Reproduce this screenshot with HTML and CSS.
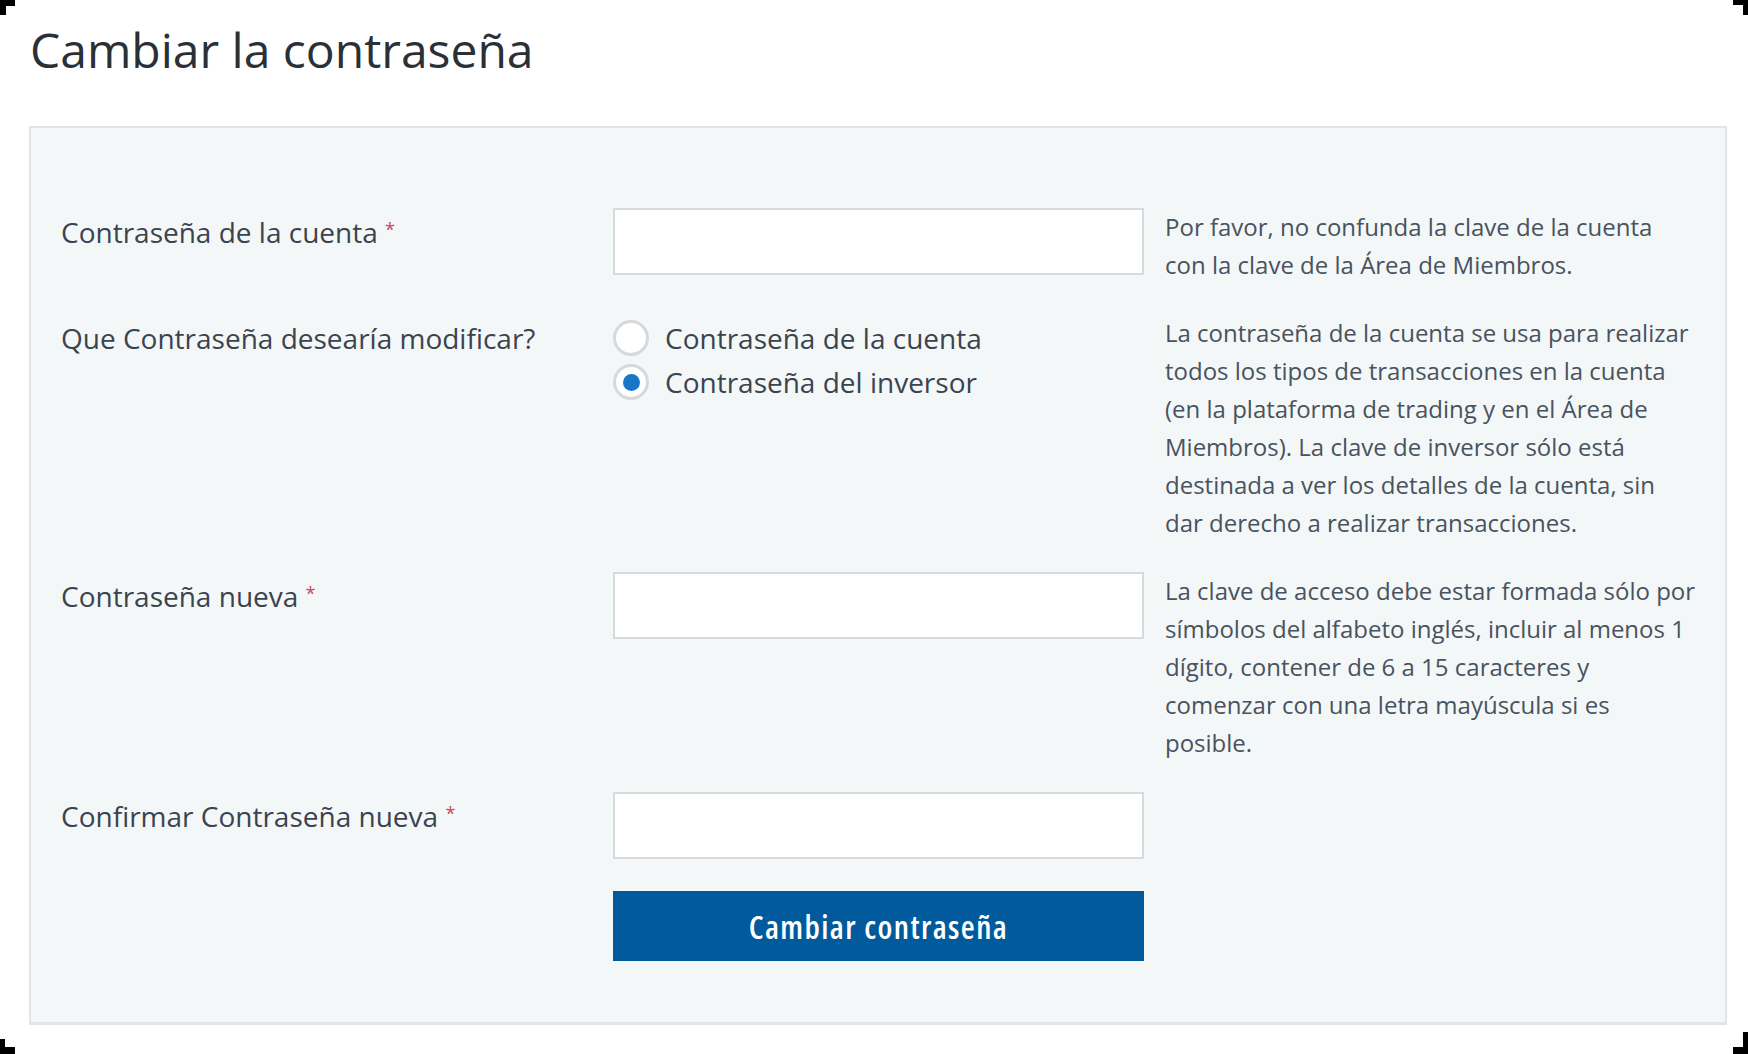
FILE: index.html
```html
<!DOCTYPE html>
<html lang="es">
<head>
<meta charset="utf-8">
<title>Cambiar la contraseña</title>
<link rel="stylesheet" href="styles.css">
</head>
<body>
<div class="page">
  <h1 class="title">Cambiar la contraseña</h1>
  <form class="panel">
    <label class="label" for="cur">Contraseña de la cuenta <span class="req">*</span></label>
    <div class="field"><input id="cur" class="input" type="password"></div>
    <p class="help">Por favor, no confunda la clave de la cuenta<br>con la clave de la Área de Miembros.</p>

    <div class="label">Que Contraseña desearía modificar?</div>
    <div class="field radios">
      <label class="option"><span class="radio"></span>Contraseña de la cuenta</label>
      <label class="option"><span class="radio checked"></span>Contraseña del inversor</label>
    </div>
    <p class="help">La contraseña de la cuenta se usa para realizar<br>todos los tipos de transacciones en la cuenta<br>(en la plataforma de trading y en el Área de<br>Miembros). La clave de inversor sólo está<br>destinada a ver los detalles de la cuenta, sin<br>dar derecho a realizar transacciones.</p>

    <label class="label" for="new">Contraseña nueva <span class="req">*</span></label>
    <div class="field"><input id="new" class="input" type="password"></div>
    <p class="help">La clave de acceso debe estar formada sólo por<br>símbolos del alfabeto inglés, incluir al menos 1<br>dígito, contener de 6 a 15 caracteres y<br>comenzar con una letra mayúscula si es<br>posible.</p>

    <label class="label" for="conf">Confirmar Contraseña nueva <span class="req">*</span></label>
    <div class="field"><input id="conf" class="input" type="password"></div>
    <p class="help"></p>

    <div class="field btn-cell"><button type="button" class="button">Cambiar contraseña</button></div>
  </form>
</div>
<span class="corner tl"></span>
<span class="corner tr"></span>
<span class="corner bl"></span>
<span class="corner br"></span>
</body>
</html>
```

FILE: styles.css
```css
html, body {
  margin: 0;
  padding: 0;
  background: #ffffff;
}
body {
  font-family: "Open Sans", "Noto Sans", "Liberation Sans", sans-serif;
  font-stretch: 95%;
  color: #36404a;
}
.page {
  padding: 0 21px 0 29px;
}
.title {
  margin: 0;
  padding-top: 15px;
  height: 126px;
  box-sizing: border-box;
  font-size: 48px;
  font-stretch: 95%;
  line-height: 70px;
  font-weight: 400;
  color: #2a3036;
  padding-left: 1px;
}
.panel {
  display: grid;
  grid-template-columns: 552px 531px 1fr;
  row-gap: 30px;
  background: #f4f7f8;
  border: 2px solid #e2e5e7;
  border-bottom-width: 3px;
  padding: 80px 0 61px 30px;
  margin: 0;
}
.label {
  display: block;
  padding-top: 5px;
  font-size: 28px;
  line-height: 38px;
  color: #3a444f;
}
.req {
  color: #c7475a;
  font-size: 18px;
  vertical-align: top;
  position: relative;
  top: -3px;
}
.field {
  display: flex;
  flex-direction: column;
}
.input {
  box-sizing: border-box;
  width: 531px;
  height: 67px;
  margin: 0;
  border: 2px solid #d7dadd;
  background: #ffffff;
  outline: none;
  padding: 0 16px;
}
.help {
  margin: 0;
  padding: 0 20px 0 21px;
  font-size: 24px;
  line-height: 38px;
  color: #48535e;
  white-space: nowrap;
}
.radios {
  padding-top: 2px;
}
.option {
  display: flex;
  align-items: center;
  height: 44px;
  font-size: 28px;
  color: #3a444f;
}
.radio {
  box-sizing: border-box;
  width: 36px;
  height: 36px;
  border-radius: 50%;
  border: 3px solid #d6d9dc;
  background: #ffffff;
  margin-right: 16px;
  position: relative;
  flex: none;
}
.radio.checked::after {
  content: "";
  position: absolute;
  left: 50%;
  top: 50%;
  width: 17px;
  height: 17px;
  margin: -8.5px 0 0 -8.5px;
  border-radius: 50%;
  background: #1976c6;
}
.btn-cell {
  grid-column: 2;
  padding-top: 2px;
}
.button {
  box-sizing: border-box;
  width: 531px;
  height: 70px;
  border: none;
  margin: 0;
  background: #005a9b;
  color: #ffffff;
  font-family: inherit;
  font-stretch: 75%;
  font-size: 32px;
  letter-spacing: 1.4px;
  font-weight: 600;
  cursor: pointer;
}
.corner {
  position: fixed;
  width: 15px;
  height: 15px;
  border-color: #000000;
  border-style: solid;
  border-width: 0;
  box-sizing: border-box;
}
.corner.tl { left: 0; top: 0; border-left-width: 6px; border-top-width: 6px; }
.corner.tr { right: 0; top: 0; border-right-width: 5px; border-top-width: 5px; }
.corner.bl { left: 0; bottom: 0; border-left-width: 5px; border-bottom-width: 7px; }
.corner.br { right: 0; bottom: 0; border-right-width: 5px; border-bottom-width: 7px; height: 22px; }
```
